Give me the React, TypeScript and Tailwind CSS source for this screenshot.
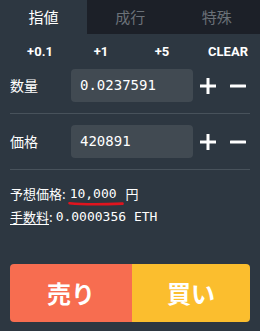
const JP = { fontFamily: '"Noto Sans CJK JP", "Noto Sans", sans-serif' };
const MONO = { fontFamily: '"DejaVu Sans Mono", "Liberation Mono", monospace' };

function PlusIcon() {
  return (
    <svg width="16" height="16" viewBox="0 0 16 16">
      <rect x="6.5" y="0" width="3" height="16" fill="#ffffff" />
      <rect x="0" y="6.5" width="16" height="3" fill="#ffffff" />
    </svg>
  );
}

function MinusIcon() {
  return (
    <svg width="16" height="16" viewBox="0 0 16 16">
      <rect x="0" y="6.5" width="16" height="3" rx="0.5" fill="#ffffff" />
    </svg>
  );
}

function InputRow({ label, value }: { label: string; value: string }) {
  return (
    <div className="flex items-center h-[33px]">
      <span className="w-[61px] text-[14px] text-white" style={JP}>
        {label}
      </span>
      <div
        className="w-[122px] h-[33px] rounded-[4px] bg-[#414a52] flex items-center pl-[9px] text-[14px] text-white"
        style={MONO}
      >
        {value}
      </div>
      <button className="ml-[7px] w-[16px] h-[16px] flex items-center justify-center">
        <PlusIcon />
      </button>
      <button className="ml-[14px] w-[16px] h-[16px] flex items-center justify-center">
        <MinusIcon />
      </button>
    </div>
  );
}

export default function App() {
  const tabs = ["指値", "成行", "特殊"];

  return (
    <div className="w-[260px] h-[331px] bg-[#2d3741] flex flex-col" style={JP}>
      <div className="flex h-[34px]">
        {tabs.map((t, i) => (
          <div
            key={t}
            className={
              i === 0
                ? "w-[87px] flex items-center justify-center text-[15px] text-white bg-[#2d3741]"
                : "flex-1 flex items-center justify-center text-[15px] text-[#6b7178] bg-[#1c2028]"
            }
          >
            {t}
          </div>
        ))}
      </div>

      <div
        className="flex items-center h-[35px] px-[10px] text-[13px] font-bold text-white"
        style={{ fontFamily: 'Roboto, "Liberation Sans", sans-serif' }}
      >
        <span className="w-[60px] text-center">+0.1</span>
        <span className="w-[62px] text-center">+1</span>
        <span className="w-[60px] text-center">+5</span>
        <span className="flex-1 text-right pr-[2px]">CLEAR</span>
      </div>

      <div className="mx-[10px] pb-[11px] border-b border-[#48525b]">
        <InputRow label="数量" value="0.0237591" />
      </div>
      <div className="mx-[10px] pt-[11px] pb-[11px] border-b border-[#48525b]">
        <InputRow label="価格" value="420891" />
      </div>

      <div className="px-[10px] pt-[12px] text-[13px] text-white leading-[23px]">
        <div className="flex items-center">
          <span style={JP}>予想価格:</span>
          <span className="relative ml-[4px]" style={MONO}>
            10,000
            <svg
              className="absolute left-[-2px] top-[19px]"
              width="56"
              height="5"
              viewBox="0 0 56 5"
            >
              <path
                d="M1.5 2.2 C 15 3.6, 35 3.4, 54.5 2.6"
                stroke="#e0141e"
                strokeWidth="2.6"
                strokeLinecap="round"
                fill="none"
              />
            </svg>
          </span>
          <span className="ml-[9px]" style={JP}>
            円
          </span>
        </div>
        <div className="flex items-center">
          <span className="underline underline-offset-2" style={JP}>
            手数料
          </span>
          <span style={JP}>:</span>
          <span className="ml-[3px]" style={MONO}>
            0.0000356 ETH
          </span>
        </div>
      </div>

      <div className="mt-auto mx-[10px] mb-[9px] h-[58px] flex rounded-[4px] overflow-hidden">
        <button className="w-[122px] bg-[#f76d50] text-white text-[24px] font-bold flex items-center justify-center" style={JP}>
          売り
        </button>
        <button className="flex-1 bg-[#fbbe2e] text-white text-[24px] font-bold flex items-center justify-center" style={JP}>
          買い
        </button>
      </div>
    </div>
  );
}
